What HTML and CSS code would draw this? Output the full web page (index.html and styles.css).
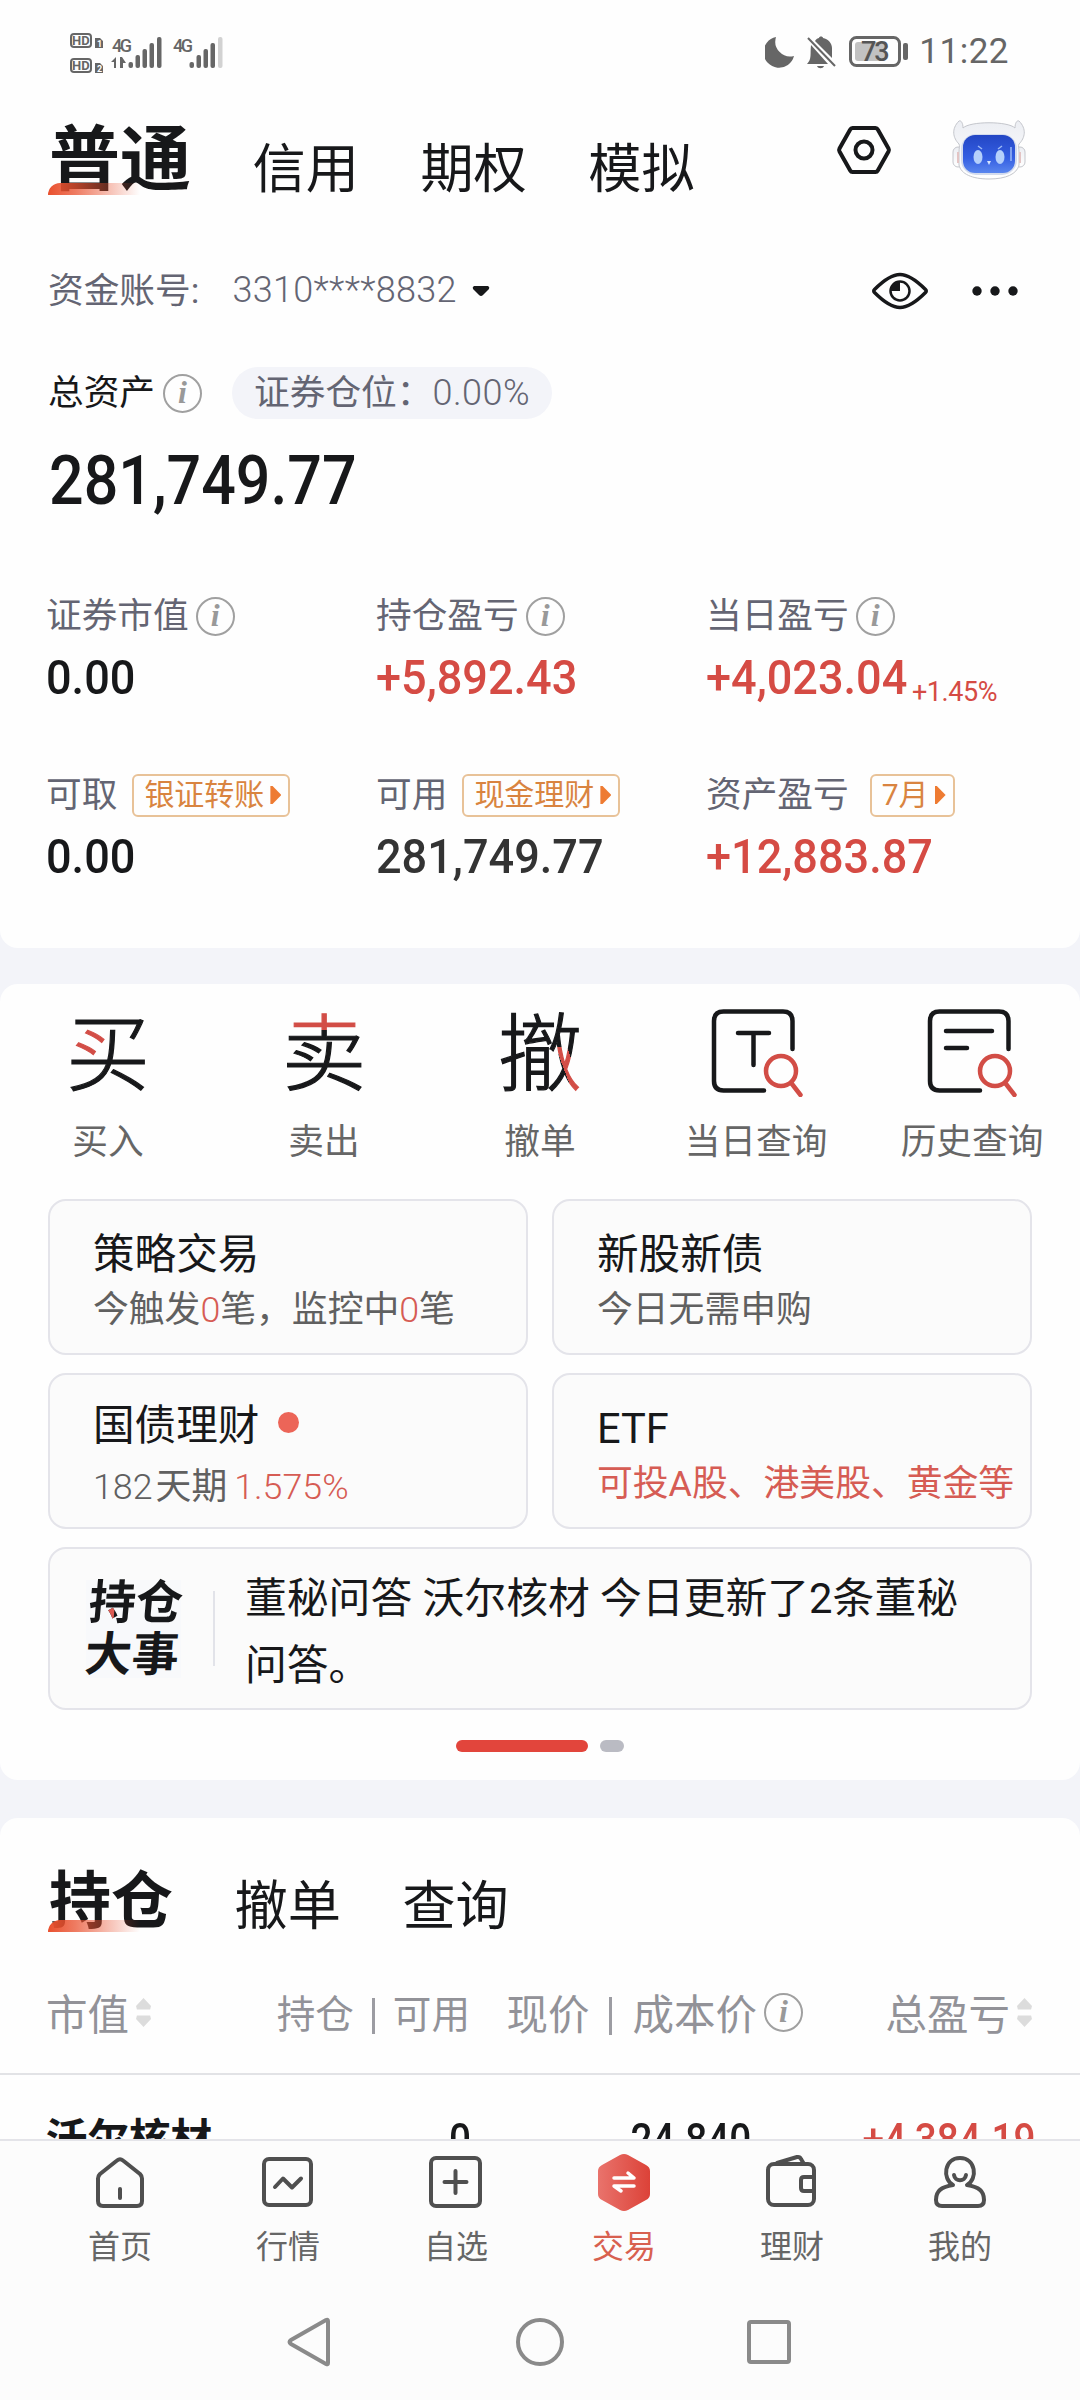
FILE: index.html
```html
<!DOCTYPE html>
<html lang="zh-CN">
<head>
    <meta charset="UTF-8">
    <meta name="viewport" content="width=device-width, initial-scale=1.0">
    <title>交易</title>
    <link rel="stylesheet" href="styles.css">
</head>
<body>
    <div class="panel account">
        <!-- Status bar -->
        <div class="status-bar">
            <svg width="160" height="44" viewBox="0 0 160 44">
                <g fill="#666">
                    <rect x="1" y="4" width="20" height="13" rx="3" fill="none" stroke="#666" stroke-width="2"/>
                    <rect x="1" y="29" width="20" height="13" rx="3" fill="none" stroke="#666" stroke-width="2"/>
                    <text x="2" y="15" class="hd">HD</text>
                    <text x="2" y="40" class="hd">HD</text>
                    <path d="M25 8h5l3 3v7h-8zM25 33h5l3 3v7h-8z"/>
                    <text x="27" y="17" class="sim">1</text>
                    <text x="27" y="42" class="sim">2</text>
                    <text x="42" y="22" class="net">4G</text>
                    <text x="103" y="22" class="net">4G</text>
                    <path d="M46 27v11h-2v-6h-3zM50 27h2l4 6h-3v5h-3z"/>
                    <rect x="58.500" y="32" width="4.500" height="6" rx="2"/>
                    <rect x="65.500" y="25" width="4.500" height="13" rx="2"/>
                    <rect x="72.500" y="19" width="4.500" height="19" rx="2"/>
                    <rect x="79.500" y="13" width="4.500" height="25" rx="2"/>
                    <rect x="87" y="7" width="4.500" height="31" rx="2"/>
                    <rect x="119.500" y="32" width="4.500" height="6" rx="2"/>
                    <rect x="126.500" y="25" width="4.500" height="13" rx="2"/>
                    <rect x="133.500" y="19" width="4.500" height="19" rx="2"/>
                    <rect x="140.500" y="13" width="4.500" height="25" rx="2"/>
                    <rect x="148" y="7" width="4.500" height="31" rx="2" fill="#d2d2d2"/>
                </g>
            </svg>
            <div class="status-right">
                <svg width="144" height="36" viewBox="0 0 144 36">
                    <path d="M11 3A15.500 15.500 0 1 0 29 22 15 15 0 0 1 11 3z" fill="#666"/>
                    <path d="M50 7c1-2 3-3 4-3 0-2 4-2 4 0 5 1 9 5 9 10v10zM46 11c-1 9 1 14-4 19h21zM52 32h7c-1 3-6 3-7 0z" fill="#666"/>
                    <path d="M43 4l27 28" stroke="#666" stroke-width="2"/>
                    <rect x="85.500" y="3.500" width="49" height="28" rx="6" fill="none" stroke="#666" stroke-width="3"/>
                    <rect x="90" y="8" width="31" height="19" rx="3" fill="#c2c2c2"/>
                    <rect x="138" y="9" width="5" height="17" rx="2" fill="#666"/>
                    <text x="96" y="27" class="level">73</text>
                </svg>
                <span class="time">11:22</span>
            </div>
        </div>

        <!-- Top tabs -->
        <div class="header">
            <div class="tabs">
                <span class="tab active">普通</span>
                <span class="tab">信用</span>
                <span class="tab">期权</span>
                <span class="tab">模拟</span>
            </div>
            <div class="header-icons">
                <svg width="56" height="52" viewBox="0 0 56 52" fill="none" stroke="#17181a" stroke-width="4">
                    <path d="M16.500 4h23q1.500 0 2.300 1.500l10.700 19q.8 1.500 0 3l-10.700 19q-.8 1.500-2.300 1.500h-23q-1.500 0-2.300-1.500L3.500 27.500q-.8-1.500 0-3l10.700-19Q15 4 16.500 4z"/>
                    <circle cx="28" cy="26" r="8.500"/>
                </svg>
                <svg width="74" height="60" viewBox="0 0 74 60">
                    <defs>
                        <linearGradient id="face" x1="0" y1="0" x2="0" y2="1">
                            <stop offset="0" stop-color="#2346c4"/>
                            <stop offset=".6" stop-color="#345ee2"/>
                            <stop offset="1" stop-color="#5a86ee"/>
                        </linearGradient>
                        <linearGradient id="shell" x1="0" y1="0" x2="0" y2="1">
                            <stop offset="0" stop-color="#eceef3"/>
                            <stop offset="1" stop-color="#ffffff"/>
                        </linearGradient>
                    </defs>
                    <g fill="url(#shell)" stroke="#c4c6cc" stroke-width="1">
                        <rect x="1" y="27" width="10" height="20" rx="5"/>
                        <rect x="63" y="27" width="10" height="20" rx="5"/>
                        <path d="M7 1C-1 9 1 18 7 24c1 2 0 4 0 8v13c2 9 13 14 30 14s28-5 30-14V32c0-4-1-6 0-8 6-6 8-15 0-23-2-1-4 2-4 7C56 1 18 1 11 8 11 3 9 0 7 1z"/>
                    </g>
                    <path d="M6 32v11M68 32v11" stroke="#e3c4c4" stroke-width="2"/>
                    <rect x="9" y="14" width="56" height="41" rx="15" fill="#d3dbed"/>
                    <rect x="11" y="15" width="52" height="38" rx="12" fill="url(#face)"/>
                    <ellipse cx="26" cy="37" rx="4.500" ry="7" fill="#b5d0fb"/>
                    <ellipse cx="48" cy="37" rx="4.500" ry="7" fill="#b5d0fb"/>
                    <path d="M35 41h4l-2 4z" fill="#d6e5ff"/>
                    <path d="M26 26l4 3M50 26l-4 3M59 27v14" stroke="#9bb8f6" stroke-width="1.500"/>
                </svg>
            </div>
        </div>

        <div class="account-row">
            <span>资金账号:</span>
            <span class="account-no">3310****8832</span>
            <svg width="18" height="12" viewBox="0 0 18 12"><path d="M2 1h14q2 1 1 3l-6 6q-2 2-4 0L1 4Q0 2 2 1z" fill="#17181a"/></svg>
            <div class="account-icons">
                <svg width="56" height="40" viewBox="0 0 56 40" fill="none" stroke="#17181a" stroke-width="3.500">
                    <path d="M2.500 18.500C12 9 20 3.500 28 3.500S44 9 53.500 18.500q1.500 1.500 0 3C44 31 36 36.500 28 36.500S12 31 2.500 21.500q-1.500-1.500 0-3z"/>
                    <circle cx="28" cy="20" r="9.500" stroke-width="2.500"/>
                    <path d="M28 20V10a10 10 0 0 0-10 10z" fill="#17181a" stroke="none"/>
                </svg>
                <svg width="46" height="12" viewBox="0 0 46 12" fill="#17181a">
                    <circle cx="5" cy="6" r="4.700"/><circle cx="23" cy="6" r="4.700"/><circle cx="41" cy="6" r="4.700"/>
                </svg>
            </div>
        </div>

        <div class="total-row">
            <span>总资产</span><i class="info">i</i>
            <span class="position">证券仓位：<span class="rate">0.00%</span></span>
        </div>
        <div class="total"><span class="num">281,749.77</span></div>

        <div class="stats">
            <div class="stat">
                <div class="stat-label">证券市值<i class="info">i</i></div>
                <div class="stat-value"><span class="num">0.00</span></div>
            </div>
            <div class="stat">
                <div class="stat-label">持仓盈亏<i class="info">i</i></div>
                <div class="stat-value red"><span class="num">+5,892.43</span></div>
            </div>
            <div class="stat">
                <div class="stat-label">当日盈亏<i class="info">i</i></div>
                <div class="stat-value red"><span class="num">+4,023.04</span><span class="percent">+1.45%</span></div>
            </div>
            <div class="stat">
                <div class="stat-label">可取<span class="badge">银证转账<b></b></span></div>
                <div class="stat-value"><span class="num">0.00</span></div>
            </div>
            <div class="stat">
                <div class="stat-label">可用<span class="badge">现金理财<b></b></span></div>
                <div class="stat-value dark"><span class="num">281,749.77</span></div>
            </div>
            <div class="stat">
                <div class="stat-label">资产盈亏<span class="badge month">7月<b></b></span></div>
                <div class="stat-value red"><span class="num">+12,883.87</span></div>
            </div>
        </div>
    </div>

    <!-- Trade shortcuts -->
    <div class="panel trade">
        <div class="shortcuts">
            <div class="shortcut"><span class="glyph buy">买</span>买入</div>
            <div class="shortcut"><span class="glyph sell">卖</span>卖出</div>
            <div class="shortcut"><span class="glyph cancel">撤</span>撤单</div>
            <div class="shortcut">
                <svg width="96" height="88" viewBox="0 0 96 88" fill="none" stroke="#17181a" stroke-width="4.500" stroke-linecap="round">
                    <path d="M84.500 40V12q0-9.500-9.500-9.500H15.500Q6 2.500 6 12v60q0 9.500 9.500 9.500H56"/>
                    <path d="M30 24h31M45.500 24v32"/>
                    <g stroke="#d24d46"><circle cx="73" cy="62" r="15"/><path d="M84 75l8.500 11"/></g>
                </svg>当日查询
            </div>
            <div class="shortcut">
                <svg width="96" height="88" viewBox="0 0 96 88" fill="none" stroke="#17181a" stroke-width="4.500" stroke-linecap="round">
                    <path d="M84.500 40V12q0-9.500-9.500-9.500H15.500Q6 2.500 6 12v60q0 9.500 9.500 9.500H56"/>
                    <path d="M22 22h46M22 39h21"/>
                    <g stroke="#d24d46"><circle cx="71" cy="62" r="15"/><path d="M82 75l8.500 11"/></g>
                </svg>历史查询
            </div>
        </div>

        <div class="cards">
            <div class="card">
                <div class="card-title">策略交易</div>
                <div class="card-text">今触发<em>0</em>笔，监控中<em>0</em>笔</div>
            </div>
            <div class="card">
                <div class="card-title">新股新债</div>
                <div class="card-text">今日无需申购</div>
            </div>
            <div class="card bond">
                <div class="card-title">国债理财<span class="dot"></span></div>
                <div class="card-text"><span class="light">182</span><span class="days">天期</span><em>1.575%</em></div>
            </div>
            <div class="card">
                <div class="card-title">ETF</div>
                <div class="card-text hot">可投A股、港美股、黄金等</div>
            </div>
            <div class="card notice">
                <div class="notice-logo"><span class="top">持仓</span><span>大事</span></div>
                <div class="notice-text">董秘问答 沃尔核材 今日更新了2条董秘问答。</div>
            </div>
        </div>
        <div class="pager"><span class="on"></span><span></span></div>
    </div>

    <!-- Positions -->
    <div class="panel positions">
        <div class="tabs">
            <span class="tab active">持仓</span>
            <span class="tab">撤单</span>
            <span class="tab">查询</span>
        </div>
        <div class="columns table-head">
            <div>市值<span class="sort"></span></div>
            <div class="small">持仓<span class="bar"></span>可用</div>
            <div>现价<span class="bar"></span>成本价<i class="info">i</i></div>
            <div>总盈亏<span class="sort"></span></div>
        </div>
        <div class="columns table-row">
            <div class="name">沃尔核材</div>
            <div><span class="num">0</span></div>
            <div class="price"><span class="num">24.840</span></div>
            <div class="red"><span class="num">+4,384.19</span></div>
        </div>
    </div>

    <!-- Bottom bar -->
    <div class="tab-bar">
        <div class="tab-items">
            <div class="item">
                <svg viewBox="0 0 60 60"><path d="M8 25.500Q8 23 10 21L27 7.500q3-2.500 6 0L50 21q2 2 2 4.500V48q0 5-5 5H13q-5 0-5-5z"/><path d="M30 36v9"/></svg>首页
            </div>
            <div class="item">
                <svg viewBox="0 0 60 60"><rect x="6" y="6" width="47" height="46" rx="5"/><path d="M17 34l8-8.500 9 9 9-9"/></svg>行情
            </div>
            <div class="item">
                <svg viewBox="0 0 60 60"><rect x="5" y="5" width="49" height="48" rx="5"/><path d="M29.500 18v22M18.500 29h22"/></svg>自选
            </div>
            <div class="item on">
                <svg viewBox="0 0 60 60">
                    <defs>
                        <linearGradient id="hex" x1="0" x2="1"><stop offset="0" stop-color="#e9736c"/><stop offset="1" stop-color="#dc4238"/></linearGradient>
                    </defs>
                    <path d="M26 2q4-2 8 0l18 10q4 2 4 6v23q0 4-4 6L34 57q-4 2-8 0L8 47q-4-2-4-6V18q0-4 4-6z" fill="url(#hex)" stroke="none"/>
                    <path d="M20 25h20l-6-5M40 33H20l7 5" stroke="#fff" stroke-width="3.500"/>
                </svg>交易
            </div>
            <div class="item">
                <svg viewBox="0 0 60 60"><rect x="6" y="11" width="46" height="41" rx="6"/><path d="M15 10l20-6q3-.5 4 2l3 5"/><path d="M52 24H42q-3 0-3 3v8q0 3 3 3h10"/></svg>理财
            </div>
            <div class="item">
                <svg viewBox="0 0 60 60"><path d="M23 32C12 26 14 5 30 5s18 21 7 27c12 2 17 6 17 15q0 6-6 6H12q-6 0-6-6c0-9 5-13 17-15"/><path d="M24 22c1 7 11 7 12 0"/></svg>我的
            </div>
        </div>
        <div class="nav-keys">
            <svg width="48" height="52" viewBox="0 0 48 52"><path d="M41 5v42q0 2-2 1L4 28q-3-2 0-4L39 4q2-1 2 1z"/></svg>
            <svg width="48" height="52" viewBox="0 0 48 52"><circle cx="24" cy="26" r="22"/></svg>
            <svg width="48" height="52" viewBox="0 0 48 52"><rect x="4" y="6" width="40" height="40" rx="2"/></svg>
        </div>
    </div>
</body>
</html>
```
FILE: styles.css
```css
* {
    box-sizing: border-box;
}

body {
    margin: 0;
    height: 2400px;
    overflow: hidden;
    background-color: #f3f4f9;
    font-family: Roboto, "Noto Sans CJK SC", sans-serif;
    font-size: 35.7px;
    line-height: 1.2;
    color: #17181a;
    white-space: nowrap;
}

svg {
    display: block;
    flex: none;
}

.panel {
    background-color: #fefefe;
    border-radius: 18px;
}

.red {
    color: #d54b44;
}

/* Figures are set a little narrower than the text */
.num {
    display: inline-block;
    font-weight: 500;
    transform: scaleX(0.92);
    transform-origin: left center;
}

.info {
    display: inline-block;
    flex: none;
    width: 39px;
    height: 39px;
    margin-left: 7px;
    border: 2px solid #a0a0a0;
    border-radius: 50%;
    font: italic bold 32px/33px "Liberation Serif", serif;
    color: #999;
    text-align: center;
}

/* Account panel */
.account {
    height: 948px;
    border-radius: 0 0 18px 18px;
}

.status-bar {
    display: flex;
    justify-content: space-between;
    align-items: center;
    height: 104px;
    padding: 0 71px 0 70px;
}

.status-right {
    display: flex;
    align-items: center;
    gap: 10px;
}

.hd {
    font-size: 13px;
    font-weight: 700;
}

.sim {
    font-size: 9px;
    font-weight: 700;
    fill: #fff;
}

.net {
    font-size: 18px;
    font-weight: 500;
    letter-spacing: -2.5px;
}

.level {
    font-size: 27px;
    font-weight: 500;
    fill: #555;
    letter-spacing: -2px;
}

.time {
    font-size: 35px;
    letter-spacing: 0.5px;
    color: #666;
}

.header {
    display: flex;
    justify-content: space-between;
    height: 147px;
    padding: 0 54px 0 49px;
}

.tabs {
    display: flex;
    gap: 61.5px;
    font-size: 53.2px;
}

.tab {
    position: relative;
    line-height: 133px;
}

.tab.active {
    font-size: 71px;
    font-weight: 700;
    line-height: 111px;
}

.tab.active::after {
    content: "";
    position: absolute;
    left: -1px;
    top: 79px;
    width: 92px;
    height: 12px;
    border-top-left-radius: 12px;
    background: linear-gradient(90deg, #e9502e, rgba(233, 80, 46, 0.75) 30%, rgba(233, 80, 46, 0));
}

.header-icons {
    display: flex;
    align-items: center;
    gap: 60px;
    height: 92px;
}

.account-row {
    display: flex;
    align-items: center;
    height: 80px;
    padding: 0 62px 0 48px;
    color: #646573;
}

.account-no {
    margin: 0 15px 0 33px;
    font-size: 36px;
    font-weight: 300;
    letter-spacing: 0.3px;
}

.account-icons {
    display: flex;
    align-items: center;
    gap: 44px;
    margin-left: auto;
}

.total-row {
    display: flex;
    align-items: center;
    height: 64px;
    margin-top: 30px;
    padding-left: 48px;
}

.total-row .info {
    margin-left: 8px;
}

.position {
    width: 320px;
    margin-left: 30px;
    padding-left: 22px;
    border-radius: 26px;
    background-color: #f3f4f9;
    color: #646573;
    line-height: 52px;
}

.rate {
    font-size: 36px;
    font-weight: 300;
    letter-spacing: 0.5px;
}

.total {
    margin-top: 16px;
    padding-left: 49px;
    font-size: 69px;
    line-height: 80px;
}

.total .num {
    transform: scaleX(0.883);
}

.stats {
    display: grid;
    grid-template-columns: repeat(3, 330px);
    row-gap: 65px;
    margin-top: 73px;
    padding-left: 46px;
}

.stat-label {
    display: flex;
    align-items: center;
    height: 44px;
    line-height: 46px;
    color: #646573;
}

.stat-value {
    margin-top: 10px;
    font-size: 49px;
    line-height: 60px;
}

.stat-value.dark {
    color: #333;
}

.percent {
    display: inline-block;
    margin-left: -13px;
    font-size: 27px;
    line-height: 30px;
    letter-spacing: -0.4px;
    transform: translateY(7px);
}

.badge {
    display: flex;
    align-items: center;
    height: 43px;
    margin-left: 15px;
    padding: 0 7px 0 10px;
    border: 2px solid #e8c298;
    border-radius: 6px;
    font-size: 30px;
    color: #d98440;
}

.badge b {
    width: 11px;
    height: 18px;
    margin-left: 6px;
    background-color: #ee7b32;
    clip-path: polygon(0 0, 20% 0, 100% 50%, 20% 100%, 0 100%);
}

.badge.month {
    margin-left: 21px;
}

/* Trade panel */
.trade {
    height: 796px;
    margin-top: 36px;
    padding-top: 25px;
}

.shortcuts {
    display: flex;
}

.shortcut {
    display: flex;
    flex-direction: column;
    align-items: center;
    width: 216px;
    line-height: 45px;
    color: #666;
}

.shortcut svg,
.glyph {
    height: 88px;
    margin-bottom: 23px;
}

/* One part of every character is red */
.glyph {
    width: 84px;
    font-size: 84px;
    font-weight: 300;
    line-height: 94px;
    color: transparent;
    -webkit-text-stroke: 1.2px transparent;
    background-color: #17181a;
    background-repeat: no-repeat;
    -webkit-background-clip: text;
    background-clip: text;
}

.glyph.buy {
    background-image: linear-gradient(#d24d46, #d24d46);
    background-position: 6px 19px;
    background-size: 33px 29px;
}

.glyph.sell {
    background-image: linear-gradient(#d24d46, #d24d46);
    background-size: 84px 21px;
}

.glyph.cancel {
    background-image: linear-gradient(69.7deg, transparent 41%, #d24d46 41%, #d24d46 66%, transparent 66%);
    background-position: 58px 38px;
    background-size: 26px 50px;
}

.cards {
    display: grid;
    grid-template-columns: 480px 480px;
    gap: 18px 24px;
    margin: 34px 48px 0;
}

.card {
    height: 156px;
    padding: 29px 0 0 43px;
    border: 2px solid #e4e4ea;
    border-radius: 18px;
    background-color: #fbfbfb;
}

.card-title {
    display: flex;
    align-items: center;
    font-size: 41.6px;
    line-height: 50px;
}

.card-text {
    margin-top: 8px;
    font-size: 35.8px;
    line-height: 44px;
    color: #606060;
}

.card em {
    font-style: normal;
    font-weight: 300;
    color: #d65c54;
}

.card .hot {
    color: #d65c54;
}

.bond {
    padding-top: 26px;
}

.bond .card-text {
    margin-top: 14px;
}

.light {
    font-weight: 300;
}

.days {
    margin: 0 7px 0 3px;
}

.dot {
    width: 21px;
    height: 21px;
    margin: -8px 0 0 19px;
    border-radius: 50%;
    background-color: #ec6558;
}

.notice {
    grid-column: span 2;
    display: flex;
    align-items: center;
    height: 163px;
    padding: 0 0 0 36px;
}

.notice-logo {
    position: relative;
    width: 95px;
    height: 98px;
    margin-right: 32px;
    background-color: #f8f9fb;
    font-size: 47px;
    font-weight: 700;
    line-height: 52px;
}

.notice-logo span {
    display: block;
    margin-left: -1px;
    transform: skewX(-5deg);
}

.notice-logo .top {
    width: 100px;
    margin-top: -3px;
    padding-left: 4px;
    background: linear-gradient(#de5c54, #de5c54) 22px 31px / 8px 11px no-repeat, #17181a;
    -webkit-background-clip: text;
    background-clip: text;
    color: transparent;
}

.notice-text {
    position: relative;
    width: 760px;
    padding: 7px 0 0 32px;
    font-size: 41.8px;
    line-height: 67px;
    white-space: normal;
}

.notice-text::before {
    content: "";
    position: absolute;
    left: 0;
    top: 33px;
    width: 2px;
    height: 75px;
    background-color: #e2e3e9;
}

.pager {
    display: flex;
    justify-content: center;
    gap: 12px;
    margin-top: 30px;
}

.pager span {
    width: 24px;
    height: 12px;
    border-radius: 6px;
    background-color: #babbc3;
}

.pager .on {
    width: 132px;
    background-color: #e2453c;
}

/* Positions panel */
.positions {
    height: 321px;
    margin-top: 38px;
    border-radius: 18px 18px 0 0;
    overflow: hidden;
}

.positions .tabs {
    height: 158px;
    padding-left: 49px;
}

.positions .tab {
    line-height: 179px;
}

.positions .tab.active {
    font-size: 62px;
    line-height: 167px;
}

.positions .tab.active::after {
    top: 102px;
}

.columns {
    display: grid;
    grid-template-columns: 200px 224px 333px 229px;
    padding-left: 46px;
    font-size: 41.5px;
}

.columns > div {
    display: flex;
    align-items: center;
    justify-content: flex-end;
}

.columns > div:first-child {
    justify-content: flex-start;
}

.table-head {
    height: 99px;
    padding-bottom: 18px;
    border-bottom: 2px solid #e2e3e6;
    color: #929298;
}

.table-head .small {
    font-size: 38.6px;
}

.table-head .info {
    margin-top: -6px;
}

.bar {
    width: 3px;
    height: 38px;
    margin: 0 20px;
    background-color: #9c9ca2;
}

.small .bar {
    height: 36px;
    margin: 0 18px;
}

.sort {
    width: 15px;
    height: 29px;
    margin: -6px 0 0 7px;
    background-color: #dcdcdc;
    clip-path: polygon(50% 0, 100% 28%, 94% 40%, 6% 40%, 0 28%, 50% 0, 50% 100%, 0 72%, 6% 60%, 94% 60%, 100% 72%, 50% 100%);
}

.table-row {
    line-height: 130px;
    font-size: 44px;
}

.table-row .name {
    font-size: 41.5px;
    font-weight: 700;
}

.table-row .num {
    margin-right: -1px;
    transform: scaleX(0.88);
    transform-origin: right center;
}

.table-row .price {
    padding-right: 53px;
}

.table-row .red .num {
    margin-right: -4px;
}

/* Bottom bar */
.tab-bar {
    height: 261px;
    border-top: 2px solid #e4e4e9;
    background-color: #fcfcfc;
}

.tab-items {
    display: flex;
    padding: 12px 36px 0;
}

.item {
    display: flex;
    flex-direction: column;
    align-items: center;
    width: 168px;
    font-size: 32px;
    line-height: 40px;
    color: #666;
}

.item.on {
    color: #d8604f;
}

.item svg {
    width: 60px;
    height: 60px;
    margin-bottom: 14px;
    fill: none;
    stroke: #4f4f4f;
    stroke-width: 4;
    stroke-linecap: round;
    stroke-linejoin: round;
}

.nav-keys {
    display: flex;
    justify-content: center;
    gap: 181px;
    margin-top: 49px;
}

.nav-keys svg {
    fill: none;
    stroke: #8a8a8a;
    stroke-width: 4;
}
```
